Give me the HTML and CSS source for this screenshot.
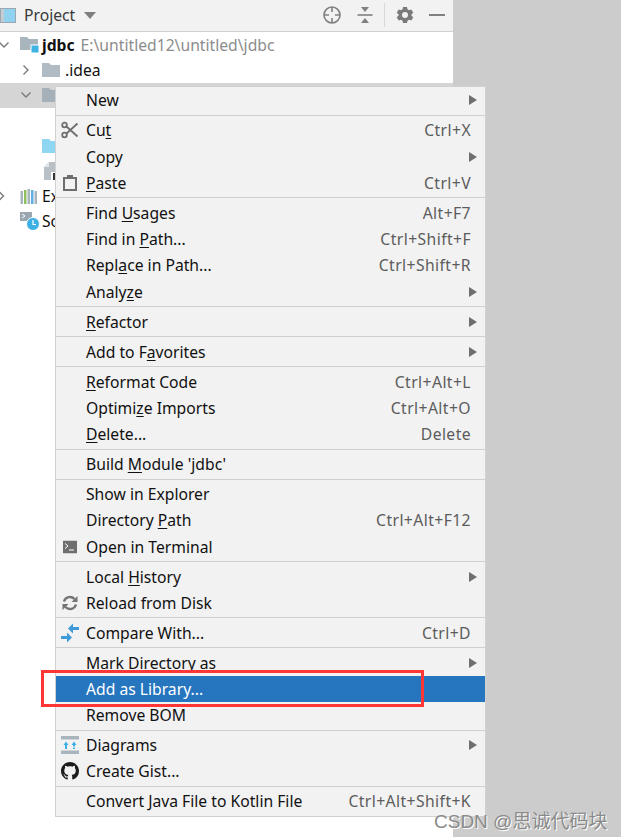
FILE: index.html
```html
<!DOCTYPE html>
<html lang="en">
<head>
<meta charset="utf-8">
<title>Project</title>
<link rel="stylesheet" href="styles.css">
</head>
<body>
<div class="page">
  <div class="panel">
    <header class="toolbar">
      <svg class="tb-win" width="16" height="15" viewBox="0 0 16 15"><rect x="0.5" y="0.5" width="15" height="14" fill="#8fd3f0" stroke="#9aa7b0"/><rect x="1" y="1" width="3" height="13" fill="#c4ccd2"/></svg>
      <span class="tb-title">Project</span>
      <svg class="tb-caret" width="12" height="7" viewBox="0 0 12 7"><path d="M0 0h12L6 7z" fill="#7f7f7f"/></svg>
      <span class="tb-spacer"></span>
      <svg class="tb-icon" width="20" height="20" viewBox="0 0 20 20" fill="none" stroke="#808080" stroke-width="1.6"><circle cx="10" cy="10" r="8"/><path d="M10 2v5M10 13v5M2 10h5M13 10h5"/></svg>
      <svg class="tb-icon tb-collapse" width="18" height="20" viewBox="0 0 18 20"><path d="M1.500 10h15" stroke="#808080" stroke-width="1.6"/><path d="M5 2h8L9 7zM5 18h8L9 13z" fill="#808080"/></svg>
      <span class="tb-div"></span>
      <svg class="tb-icon tb-gear" width="18" height="18" viewBox="0 0 18 18"><path fill="#7a7a7a" fill-rule="evenodd" d="M7 1h4l.5 2.300 1.600.9 2.200-.8 2 3.400-1.800 1.500v1.400l1.800 1.500-2 3.400-2.200-.8-1.600.9L11 17H7l-.5-2.300-1.600-.9-2.200.8-2-3.400 1.800-1.500V8.300L.7 6.800l2-3.400 2.200.8 1.600-.9zM9 6a3 3 0 1 0 0 6 3 3 0 0 0 0-6z"/></svg>
      <svg class="tb-icon tb-min" width="16" height="4" viewBox="0 0 16 4"><rect width="16" height="2" y="1" fill="#808080"/></svg>
    </header>
    <ul class="tree">
      <li class="node">
        <svg class="chev" width="12" height="12" viewBox="0 0 12 12" fill="none" stroke="#7a7a7a" stroke-width="1.4"><path d="M1.500 3.500 6 8l4.500-4.500"/></svg>
        <svg class="ico-module" width="20" height="18" viewBox="0 0 20 18"><path d="M0 1h7l2 2h9v11H0z" fill="#a9b5bd"/><rect x="11" y="9" width="8" height="8" fill="#3fb3e4" stroke="#fff"/></svg>
        <b class="root-name">jdbc</b><span class="root-path">E:\untitled12\untitled\jdbc</span>
      </li>
      <li class="node lvl1">
        <svg class="chev" width="12" height="12" viewBox="0 0 12 12" fill="none" stroke="#7a7a7a" stroke-width="1.4"><path d="M3.500 1.500 8 6l-4.500 4.500"/></svg>
        <svg class="ico-folder" width="18" height="14" viewBox="0 0 18 14"><path d="M0 0h7l2 2h9v12H0z" fill="#b0bbc3"/></svg>
        <span>.idea</span>
      </li>
      <li class="node lvl1 selected">
        <svg class="chev" width="12" height="12" viewBox="0 0 12 12" fill="none" stroke="#7a7a7a" stroke-width="1.4"><path d="M1.500 3.500 6 8l4.500-4.500"/></svg>
        <svg class="ico-folder" width="18" height="14" viewBox="0 0 18 14"><path d="M0 0h7l2 2h9v12H0z" fill="#a5b0b8"/></svg>
      </li>
      <li class="node"></li>
      <li class="node lvl2">
        <svg class="ico-folder" width="18" height="14" viewBox="0 0 18 14"><path d="M0 0h7l2 2h9v12H0z" fill="#8fd6f2"/></svg>
      </li>
      <li class="node lvl2b">
        <svg class="ico-file" width="14" height="18" viewBox="0 0 14 18"><path d="M5 0h6v18H0V5z" fill="#b9c1c7"/><path d="M5 0v5H0z" fill="#e4e7ea"/><rect x="7" y="10" width="7" height="8" fill="#fff"/><rect x="9" y="11" width="2" height="7" fill="#333"/></svg>
      </li>
      <li class="node">
        <svg class="chev" width="12" height="12" viewBox="0 0 12 12" fill="none" stroke="#7a7a7a" stroke-width="1.4"><path d="M1 1.500 5.500 6 1 10.500"/></svg>
        <svg class="ico-lib" width="18" height="16" viewBox="0 0 18 16"><rect x="0.500" y="3" width="2.500" height="13" fill="#a9b5bd"/><rect x="4" y="2" width="2.500" height="14" fill="#8fbf5f"/><rect x="7.500" y="1" width="2.500" height="15" fill="#a9b5bd"/><rect x="11" y="2" width="2.500" height="14" fill="#5fb0e0"/><rect x="14.500" y="3" width="2.500" height="13" fill="#a9b5bd"/></svg>
        <span>Ex</span>
      </li>
      <li class="node node-last">
        <svg class="ico-scratch" width="20" height="20" viewBox="0 0 20 20"><path d="M0 1h12v9H0z" fill="#9aa7b0"/><path d="M2 3l3 2-3 2" fill="none" stroke="#fff"/><circle cx="13" cy="13" r="6.500" fill="#3fb0e4" stroke="#fff"/><path d="M13 9v4.500h3" fill="none" stroke="#fff" stroke-width="1.200"/></svg>
        <span>So</span>
      </li>
    </ul>
  </div>
  <div class="backdrop"></div>

  <nav class="menu">
    <div class="group">
      <div class="item"><span class="lbl">New</span><i class="sub"></i></div>
    </div>
    <div class="group">
      <div class="item">
        <svg class="mi" width="18" height="18" viewBox="0 0 18 18" fill="none" stroke="#6e6e6e" stroke-width="1.800"><circle cx="3.500" cy="4" r="2.300"/><circle cx="3.500" cy="14" r="2.300"/><path d="M5.500 5.500 16.500 15.500M5.500 12.500 16.500 2.500"/></svg>
        <span class="lbl">Cu<u>t</u></span><span class="key">Ctrl+X</span></div>
      <div class="item"><span class="lbl">Copy</span><i class="sub"></i></div>
      <div class="item">
        <svg class="mi" width="14" height="16" viewBox="0 0 14 16"><path fill="#6e6e6e" fill-rule="evenodd" d="M0 2h4V0h6v2h4v14H0zM2 4v10h10V4z"/></svg>
        <span class="lbl"><u>P</u>aste</span><span class="key">Ctrl+V</span></div>
    </div>
    <div class="group">
      <div class="item"><span class="lbl">Find <u>U</u>sages</span><span class="key">Alt+F7</span></div>
      <div class="item"><span class="lbl">Find in <u>P</u>ath...</span><span class="key">Ctrl+Shift+F</span></div>
      <div class="item"><span class="lbl">Repl<u>a</u>ce in Path...</span><span class="key">Ctrl+Shift+R</span></div>
      <div class="item"><span class="lbl">Analy<u>z</u>e</span><i class="sub"></i></div>
    </div>
    <div class="group">
      <div class="item"><span class="lbl"><u>R</u>efactor</span><i class="sub"></i></div>
    </div>
    <div class="group">
      <div class="item"><span class="lbl">Add to F<u>a</u>vorites</span><i class="sub"></i></div>
    </div>
    <div class="group">
      <div class="item"><span class="lbl"><u>R</u>eformat Code</span><span class="key">Ctrl+Alt+L</span></div>
      <div class="item"><span class="lbl">Optimi<u>z</u>e Imports</span><span class="key">Ctrl+Alt+O</span></div>
      <div class="item"><span class="lbl"><u>D</u>elete...</span><span class="key">Delete</span></div>
    </div>
    <div class="group">
      <div class="item"><span class="lbl">Build <u>M</u>odule 'jdbc'</span></div>
    </div>
    <div class="group">
      <div class="item"><span class="lbl">Show in Explorer</span></div>
      <div class="item"><span class="lbl">Directory <u>P</u>ath</span><span class="key">Ctrl+Alt+F12</span></div>
      <div class="item">
        <svg class="mi" width="14" height="13" viewBox="0 0 14 13"><rect width="14" height="13" fill="#6e6e6e"/><path d="M2 3l3 2.500L2 8" fill="none" stroke="#fff"/><path d="M6 9.500h5" stroke="#fff"/></svg>
        <span class="lbl">Open in Terminal</span></div>
    </div>
    <div class="group">
      <div class="item"><span class="lbl">Local <u>H</u>istory</span><i class="sub"></i></div>
      <div class="item">
        <svg class="mi" width="16" height="16" viewBox="0 0 16 16" fill="none" stroke="#747474" stroke-width="2.400"><path d="M2 6.500a6.200 6.200 0 0 1 10.500-2.500M14 9.500a6.200 6.200 0 0 1-10.500 2.500"/><path d="M15.500 1v6h-6zM.5 15V9h6z" fill="#747474" stroke="none"/></svg>
        <span class="lbl">Reload from Disk</span></div>
    </div>
    <div class="group">
      <div class="item">
        <svg class="mi" width="18" height="20" viewBox="0 0 18 20" fill="#3f9ad8"><path d="M7 5.500 12 .5v3.500h6v3h-6v3.500zM11 14.500 6 19.500v-3.500H0v-3h6V9.500z"/></svg>
        <span class="lbl">Compare With...</span><span class="key">Ctrl+D</span></div>
    </div>
    <div class="group">
      <div class="item"><span class="lbl">Mark Directory as</span><i class="sub"></i></div>
      <div class="item active"><span class="lbl">Add as Library...</span></div>
      <div class="item"><span class="lbl">Remove BOM</span></div>
    </div>
    <div class="group">
      <div class="item">
        <svg class="mi" width="18" height="18" viewBox="0 0 18 18"><rect width="18" height="3.500" fill="#a9b5bd"/><rect y="14.500" width="18" height="3.500" fill="#a9b5bd"/><path d="M5 5.500 7.500 9H6v4H4V9H2.500zM13 5.500 15.500 9H14v1.500h-2V9h-1.500zM12 11.500h2V13h-2z" fill="#3fb0e4"/></svg>
        <span class="lbl">Diagrams</span><i class="sub"></i></div>
      <div class="item">
        <svg class="mi" width="18" height="18" viewBox="0 0 16 16"><path fill="#1c1c1c" d="M8 0C3.580 0 0 3.580 0 8c0 3.540 2.290 6.530 5.470 7.590.4.070.55-.17.55-.38 0-.19-.01-.82-.01-1.490-2.010.37-2.530-.49-2.690-.94-.09-.23-.48-.94-.82-1.130-.28-.15-.68-.52-.01-.53.630-.01 1.080.58 1.230.82.720 1.210 1.870.870 2.330.660.070-.52.280-.870.510-1.070-1.780-.2-3.640-.890-3.640-3.950 0-.870.310-1.590.820-2.150-.08-.2-.36-1.020.08-2.120 0 0 .670-.21 2.200.82.640-.18 1.320-.27 2-.27s1.360.09 2 .27c1.530-1.040 2.200-.82 2.200-.82.440 1.100.160 1.920.080 2.120.51.560.820 1.270.820 2.150 0 3.070-1.870 3.750-3.650 3.950.290.250.540.730.540 1.480 0 1.070-.010 1.930-.010 2.200 0 .210.150.460.550.380A8.010 8.010 0 0 0 16 8c0-4.420-3.580-8-8-8z"/></svg>
        <span class="lbl">Create Gist...</span></div>
    </div>
    <div class="group">
      <div class="item"><span class="lbl">Convert Java File to Kotlin File</span><span class="key">Ctrl+Alt+Shift+K</span></div>
    </div>
  </nav>

  <div class="redbox"></div>
  <div class="watermark">CSDN @思诚代码块</div>
</div>
</body>
</html>
```

FILE: styles.css
```css
* { box-sizing: border-box; }
html, body { margin: 0; padding: 0; height: 100%; overflow: hidden; background: #fff; }
body { font-family: "Noto Sans", "Noto Sans CJK SC", sans-serif; font-size: 15.7px; color: #111; }
.page { position: relative; display: flex; width: 621px; height: 837px; overflow: hidden; }
.panel { width: 453px; flex: none; background: #fff; }
.backdrop { flex: 1; background: #cccccc; }

.toolbar { height: 32px; display: flex; align-items: center; background: #f2f2f2; border-bottom: 1px solid #d1d1d1; padding: 0 8px 1px 0; }
.tb-win { margin-right: 8px; }
.tb-title { color: #3a3a3a; font-size: 15.7px; }
.tb-caret { margin-left: 9px; margin-top: 1px; }
.tb-spacer { flex: 1; }
.tb-icon { flex: none; }
.tb-collapse { margin-left: 14px; }
.tb-div { width: 1px; height: 24px; background: #d8d8d8; margin: 0 11px 0 10px; }
.tb-min { margin-left: 15px; }

.tree { list-style: none; margin: 0; padding: 0.5px 0 0; }
.node { height: 25.2px; display: flex; align-items: center; position: relative; }
.node .chev { margin-right: 10px; margin-left: -2px; }
.lvl1 { padding-left: 20px; }
.lvl1 .chev { margin-right: 10px; margin-left: 0; }
.lvl1 .ico-folder { margin-right: 5px; }
.lvl2 { padding-left: 42px; }
.lvl2b { padding-left: 44px; }
.selected { background: #d5d5d5; }
.ico-module { margin-right: 2px; }
.root-name { font-weight: 700; color: #111; }
.root-path { color: #8c8c8c; margin-left: 6px; }
.ico-lib { margin-right: 4px; }
.ico-scratch { margin-left: 20px; margin-right: 2px; }

.menu { position: absolute; left: 55px; top: 86px; width: 431px; background: #f2f2f2; border: 1px solid #d1d1d1; }
.group { padding: 1.33px 0; border-top: 1px solid #cfcfcf; }
.group:first-child { border-top: 0; padding-top: 0.33px; }
.item { height: 26.29px; display: flex; align-items: center; position: relative; padding: 0 14px 0 30px; color: #111; white-space: nowrap; }
.lbl { flex: 1; }
.key { color: #5c5c5c; letter-spacing: 0.42px; }
.sub { width: 0; height: 0; border-left: 8px solid #6e6e6e; border-top: 5px solid transparent; border-bottom: 5px solid transparent; margin-right: -6px; flex: none; }
.mi { position: absolute; left: 14px; top: 50%; transform: translate(-50%, -50%); }
.active { background: #2675bf; color: #fff; }
u { text-underline-offset: 2px; }

.redbox { position: absolute; left: 41px; top: 670px; width: 383px; height: 37px; border: 3px solid #ff3636; }
.watermark { position: absolute; left: 434px; top: 806px; font-size: 19px; color: #8a8a8a; text-shadow: 1px 1px 0 #fff; white-space: nowrap; font-family: "Liberation Sans", "Noto Sans CJK SC", sans-serif; }
```
